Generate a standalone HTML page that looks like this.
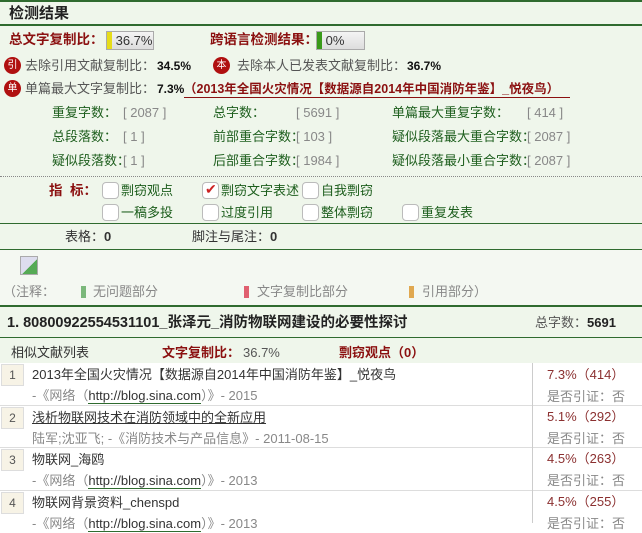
<html><head><style>
body{margin:0;width:642px;height:521px;overflow:hidden;background:#eff6eb;font-family:"Liberation Sans","Noto Sans CJK SC",sans-serif;font-size:12px;position:relative}
.a{position:absolute;white-space:nowrap;line-height:16px}
.r{color:#8b1010;font-weight:bold}
.g{color:#1d5e1d;font-size:13px}
.gr{color:#888}
.s{font-size:13px}
.hl{position:absolute;left:0;width:642px}
.cb{position:absolute;width:15px;height:15px;border:1px solid #bbb;border-radius:4px;background:#fff}
.ic{position:absolute;width:17px;height:17px;border-radius:50%;background:#b01010;color:#fff;font-size:10px;text-align:center;line-height:17px}
.row{position:absolute;left:0;width:642px;height:42px;background:#fff}
.num{position:absolute;left:1px;top:1px;width:21px;height:20px;background:#f7f3e6;border:1px solid #ddd;color:#555;text-align:center;line-height:20px}
</style></head><body>
<div class="hl" style="top:0;height:2px;background:#2f6b2f"></div>
<div class="a" style="left:9px;top:6px;font-size:15px;font-weight:bold;color:#222">检测结果</div>
<div class="hl" style="top:24px;height:2px;background:#2f6b2f"></div>

<div class="a r" style="left:9px;top:32px;font-size:13.5px">总文字复制比：</div>
<div class="a" style="left:106px;top:31px;width:46px;height:17px;border:1px solid #aaa;background:linear-gradient(#f4f4f4,#ddd);color:#333;line-height:17px;font-size:13px"><span style="display:inline-block;width:5px;height:17px;background:#e6dc1a;vertical-align:top"></span> 36.7%</div>
<div class="a r" style="left:210px;top:32px;font-size:13.5px">跨语言检测结果：</div>
<div class="a" style="left:316px;top:31px;width:47px;height:17px;border:1px solid #aaa;background:linear-gradient(#f4f4f4,#ddd);color:#333;line-height:17px;font-size:13px"><span style="display:inline-block;width:5px;height:17px;background:#3a9a1a;vertical-align:top"></span> 0%</div>

<div class="ic" style="left:4px;top:57px">引</div>
<div class="a s" style="left:25px;top:58px;color:#555">去除引用文献复制比：</div><div class="a" style="left:157px;top:58px;color:#111;font-weight:bold">34.5%</div>
<div class="ic" style="left:213px;top:57px">本</div>
<div class="a s" style="left:237px;top:58px;color:#555">去除本人已发表文献复制比：</div><div class="a" style="left:407px;top:58px;color:#111;font-weight:bold">36.7%</div>
<div class="ic" style="left:4px;top:80px">单</div>
<div class="a s" style="left:25px;top:81px;color:#555">单篇最大文字复制比：</div><div class="a" style="left:157px;top:81px;color:#111;font-weight:bold">7.3%</div>
<div class="a" style="left:184px;top:81px;width:386px;color:#8b1010;font-weight:bold;border-bottom:1px solid #8b1010;font-size:12.5px">（2013年全国火灾情况【数据源自2014年中国消防年鉴】_悦夜鸟）</div>

<div class="a g" style="left:52px;top:105px">重复字数：</div><div class="a gr s" style="left:123px;top:105px">[ 2087 ]</div>
<div class="a g" style="left:213px;top:105px">总字数：</div><div class="a gr s" style="left:296px;top:105px">[ 5691 ]</div>
<div class="a g" style="left:392px;top:105px">单篇最大重复字数：</div><div class="a gr s" style="left:527px;top:105px">[ 414 ]</div>
<div class="a g" style="left:52px;top:129px">总段落数：</div><div class="a gr s" style="left:123px;top:129px">[ 1 ]</div>
<div class="a g" style="left:213px;top:129px">前部重合字数：</div><div class="a gr s" style="left:296px;top:129px">[ 103 ]</div>
<div class="a g" style="left:392px;top:129px">疑似段落最大重合字数：</div><div class="a gr s" style="left:527px;top:129px">[ 2087 ]</div>
<div class="a g" style="left:52px;top:153px">疑似段落数：</div><div class="a gr s" style="left:123px;top:153px">[ 1 ]</div>
<div class="a g" style="left:213px;top:153px">后部重合字数：</div><div class="a gr s" style="left:296px;top:153px">[ 1984 ]</div>
<div class="a g" style="left:392px;top:153px">疑似段落最小重合字数：</div><div class="a gr s" style="left:527px;top:153px">[ 2087 ]</div>
<div class="hl" style="top:176px;border-top:1px dotted #888"></div>

<div class="a r" style="left:49px;top:183px;font-size:13.5px">指&nbsp;&nbsp;标：</div>
<div class="cb" style="left:102px;top:182px"></div><div class="a g" style="left:121px;top:183px">剽窃观点</div>
<div class="cb" style="left:202px;top:182px"></div><div class="a" style="left:205px;top:181px;color:#c22;font-size:14px">✔</div><div class="a g" style="left:221px;top:183px">剽窃文字表述</div>
<div class="cb" style="left:302px;top:182px"></div><div class="a g" style="left:321px;top:183px">自我剽窃</div>
<div class="cb" style="left:102px;top:204px"></div><div class="a g" style="left:121px;top:205px">一稿多投</div>
<div class="cb" style="left:202px;top:204px"></div><div class="a g" style="left:221px;top:205px">过度引用</div>
<div class="cb" style="left:302px;top:204px"></div><div class="a g" style="left:321px;top:205px">整体剽窃</div>
<div class="cb" style="left:402px;top:204px"></div><div class="a g" style="left:421px;top:205px">重复发表</div>
<div class="hl" style="top:223px;height:1px;background:#2f6b2f"></div>
<div class="a s" style="left:65px;top:229px;color:#333">表格：<b>0</b></div>
<div class="a s" style="left:192px;top:229px;color:#333">脚注与尾注：<b>0</b></div>
<div class="hl" style="top:249px;height:1px;background:#2f6b2f"></div>
<div class="hl" style="top:250px;height:55px;background:#f4f8f2"></div>
<div class="a" style="left:20px;top:256px;width:16px;height:17px;border:1px solid #aaa;background:linear-gradient(135deg,#dde 55%,#5a5 55%)"></div>
<div class="a gr s" style="left:3px;top:284px">（注释：</div>
<div class="a" style="left:81px;top:286px;width:5px;height:12px;background:#7bb87b"></div><div class="a gr s" style="left:93px;top:284px">无问题部分</div>
<div class="a" style="left:244px;top:286px;width:5px;height:12px;background:#e06070"></div><div class="a gr s" style="left:257px;top:284px">文字复制比部分</div>
<div class="a" style="left:409px;top:286px;width:5px;height:12px;background:#e0a850"></div><div class="a gr s" style="left:422px;top:284px">引用部分）</div>
<div class="hl" style="top:305px;height:2px;background:#2f6b2f"></div>
<div class="a" style="left:7px;top:314px;font-size:14.5px;font-weight:bold;color:#222;line-height:18px">1. 80800922554531101_张泽元_消防物联网建设的必要性探讨</div>
<div class="a s" style="left:535px;top:315px;color:#555">总字数：<b style="color:#222">5691</b></div>
<div class="hl" style="top:337px;height:1px;background:#2f6b2f"></div>
<div class="a s" style="left:11px;top:345px;color:#333">相似文献列表</div>
<div class="a r" style="left:162px;top:345px;font-size:13px">文字复制比：</div><div class="a s" style="left:243px;top:345px;color:#555">36.7%</div>
<div class="a r" style="left:339px;top:345px;font-size:13px">剽窃观点（0）</div>

<div class="row" style="top:363px"><div class="num">1</div>
<div class="a s" style="left:32px;top:4px;color:#333">2013年全国火灾情况【数据源自2014年中国消防年鉴】_悦夜鸟</div>
<div class="a gr s" style="left:32px;top:25px">-《网络（<span style="color:#333;border-bottom:1px solid #2f6b2f">http://blog.sina.com</span>）》- 2015</div></div>
<div class="row" style="top:405px;border-top:1px solid #ddd"><div class="num">2</div>
<div class="a s" style="left:32px;top:4px;color:#333;text-decoration:underline">浅析物联网技术在消防领域中的全新应用</div>
<div class="a gr s" style="left:32px;top:25px">陆军;沈亚飞; -《消防技术与产品信息》- 2011-08-15</div></div>
<div class="row" style="top:447px;border-top:1px solid #ddd"><div class="num">3</div>
<div class="a s" style="left:32px;top:4px;color:#333">物联网_海鸥</div>
<div class="a gr s" style="left:32px;top:25px">-《网络（<span style="color:#333;border-bottom:1px solid #2f6b2f">http://blog.sina.com</span>）》- 2013</div></div>
<div class="row" style="top:490px;border-top:1px solid #ddd"><div class="num">4</div>
<div class="a s" style="left:32px;top:4px;color:#333">物联网背景资料_chenspd</div>
<div class="a gr s" style="left:32px;top:25px">-《网络（<span style="color:#333;border-bottom:1px solid #2f6b2f">http://blog.sina.com</span>）》- 2013</div></div>

<div class="a" style="left:532px;top:363px;width:1px;height:160px;background:#ccc"></div>
<div class="a s" style="left:547px;top:367px;color:#8b3030">7.3%（414）</div><div class="a gr s" style="left:547px;top:389px">是否引证：否</div>
<div class="a s" style="left:547px;top:409px;color:#8b3030">5.1%（292）</div><div class="a gr s" style="left:547px;top:431px">是否引证：否</div>
<div class="a s" style="left:547px;top:451px;color:#8b3030">4.5%（263）</div><div class="a gr s" style="left:547px;top:473px">是否引证：否</div>
<div class="a s" style="left:547px;top:494px;color:#8b3030">4.5%（255）</div><div class="a gr s" style="left:547px;top:516px">是否引证：否</div>
</body></html>
